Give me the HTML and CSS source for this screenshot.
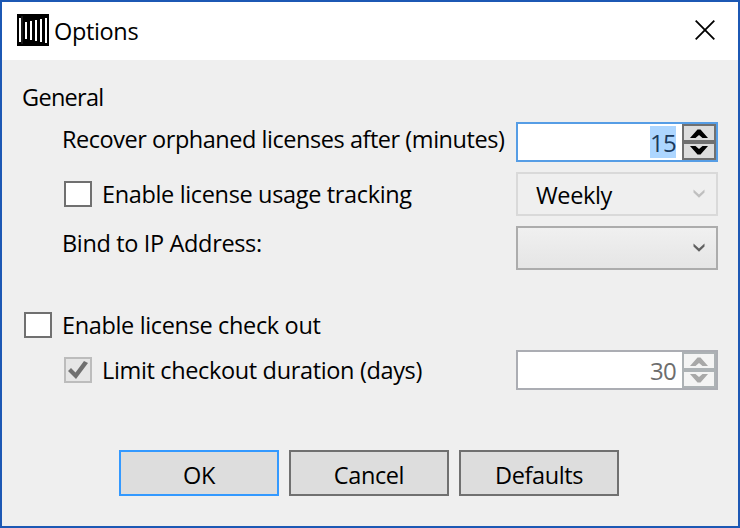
FILE: index.html
```html
<!DOCTYPE html>
<html lang="en">
<head>
<meta charset="utf-8">
<title>Options</title>
<link rel="stylesheet" href="styles.css">
</head>
<body>
<div class="window">
  <header class="titlebar">
    <svg class="app-icon" viewBox="0 0 32 32" aria-hidden="true"><path d="M0 0h32v32H0z"/><path fill="#333" d="M4.500 2h1v28h-1z"/><path fill="#fff" d="M2 4h2v24H2zM8 8h2v17H8zM13 7h2v19H13zM18 6h2v21H18zM23 5h2v23H23zM28 4h2v25H28z"/></svg>
    <span class="text title">Options</span>
    <svg class="close" viewBox="0 0 20 20"><path d="M.7.7 19.3 19.3M19.3.7.7 19.3" fill="none" stroke="#000" stroke-width="1.8"/></svg>
  </header>
  <main class="form">
    <div class="row heading"><span class="text general">General</span></div>
    <div class="row row-recover">
      <span class="text recover">Recover orphaned licenses after (minutes)</span>
      <div class="spinner focused">
        <span class="value selected">15</span>
        <div class="steps">
          <div class="step"><svg viewBox="0 0 18 9"><path d="M0 9 7.500.5h3L18 9h-5.500L9 6 5.500 9z"/></svg></div>
          <div class="step"><svg viewBox="0 0 18 9"><path d="M0 0h5.500L9 3 12.500 0H18l-7.500 8.500h-3z"/></svg></div>
        </div>
      </div>
    </div>
    <div class="row row-tracking">
      <span class="checkbox"></span><span class="text tracking">Enable license usage tracking</span>
      <div class="combo disabled"><span class="text weekly">Weekly</span><svg viewBox="0 0 12 9"><path d="M.5.5v3L6 8.800l5.500-5.300v-3L6 5.500z"/></svg></div>
    </div>
    <div class="row row-bind">
      <span class="text bind">Bind to IP Address:</span>
      <div class="combo"><svg viewBox="0 0 12 9"><path d="M.5.5v3L6 8.800l5.500-5.300v-3L6 5.500z"/></svg></div>
    </div>
    <div class="row row-checkout">
      <span class="checkbox"></span><span class="text checkout">Enable license check out</span>
    </div>
    <div class="row row-limit">
      <span class="checkbox disabled"><svg viewBox="0 0 24 22"><path d="m2 12 3-3 4.500 4.500L18 2l4 2-12 16z"/></svg></span><span class="text limit">Limit checkout duration (days)</span>
      <div class="spinner disabled">
        <span class="value">30</span>
        <div class="steps">
          <div class="step"><svg viewBox="0 0 18 9"><path d="M0 9 7.500.5h3L18 9h-5.500L9 6 5.500 9z"/></svg></div>
          <div class="step"><svg viewBox="0 0 18 9"><path d="M0 0h5.500L9 3 12.500 0H18l-7.500 8.500h-3z"/></svg></div>
        </div>
      </div>
    </div>
  </main>
  <footer class="buttons">
    <button class="default"><span class="ok">OK</span></button>
    <button><span class="cancel">Cancel</span></button>
    <button><span class="defaults">Defaults</span></button>
  </footer>
</div>
</body>
</html>
```
FILE: styles.css
```css
* { box-sizing: border-box; }
body { margin: 0; font: 23.5px/32px "Open Sans", "Noto Sans", sans-serif; letter-spacing: -.35px; color: #000; }
svg { display: block; }
.window { width: 740px; height: 528px; border: 2px solid #1c58b4; background: #efefef; }
.titlebar { height: 58px; display: flex; align-items: flex-start; background: #fff; padding: 12px 23px 0 15px; }
.app-icon { width: 32px; height: 32px; }
.title { margin: 1px auto 0 5px; }
.close { width: 20px; height: 20px; margin-top: 6px; }
.text { white-space: nowrap; }
.general { letter-spacing: -.7px; }
.recover { letter-spacing: -.46px; }
.form { padding: 21px 20px 0; }
.row { display: flex; align-items: flex-start; }
.heading { height: 41px; }
.row-recover { height: 50px; padding-left: 40px; }
.row-tracking { height: 54px; padding-left: 42px; }
.row-bind { height: 83px; padding-left: 40px; }
.row-checkout { height: 41px; padding-left: 2px; }
.row-limit { height: 40px; padding-left: 42px; }
.row .text { margin-top: 1px; }
.heading .text, .row-checkout .text { margin-top: 0; }
.row-tracking .tracking { margin-top: 6px; }
.row-limit .limit { margin-top: 4px; }
.checkbox { width: 28px; height: 26px; border: 2px solid #707070; background: #fff; margin: 9px 10px 0 0; }
.row-checkout .checkbox { margin-top: 3px; }
.row-limit .checkbox { margin-top: 7px; border-color: #bcbcbc; background: #e6e6e6; }
.checkbox svg { width: 24px; height: 22px; fill: #707070; }
.spinner { width: 202px; height: 40px; flex: none; margin-left: auto; border: 2px solid #569de5; background: #fff; display: flex; justify-content: flex-end; }
.spinner.disabled { border-color: #abadb3; color: #6d6d6d; }
.value { height: 32px; margin: 2px 6px 0 0; padding-top: 1px; font-size: 24px; letter-spacing: -.7px; }
.value.selected { background: #add6ff; color: #1b3a5c; }
.steps { width: 34px; height: 36px; background: #707070; padding: 2px; display: flex; flex-direction: column; gap: 4px; }
.step { height: 14px; background: #ddd; display: flex; justify-content: center; padding-top: 3px; }
.step + .step { padding-top: 2px; }
.step svg { width: 18px; height: 9px; }
.disabled .steps { background: #adb2b5; }
.disabled .step { background: #f4f4f4; }
.disabled .step svg { fill: #a8a8a8; }
.combo { width: 202px; height: 44px; flex: none; margin-left: auto; border: 2px solid #acacac; background: linear-gradient(#f0f0f0, #e5e5e5); display: flex; align-items: flex-start; padding: 0 11px 0 18px; }
.combo.disabled { border-color: #d9d9d9; background: #efefef; }
.combo svg { width: 12px; height: 9px; margin: 15px 0 0 auto; fill: #606060; }
.combo.disabled svg { fill: #bfbfbf; }
.row .combo .weekly { margin-top: 5px; }
.buttons { display: flex; gap: 10px; padding: 60px 0 0 117px; }
button { width: 160px; height: 46px; border: 2px solid #707070; border-radius: 0; background: #ddd; padding: 3px 0 0; font: inherit; letter-spacing: -.4px; color: inherit; }
button.default { border-color: #3399ff; }
```
